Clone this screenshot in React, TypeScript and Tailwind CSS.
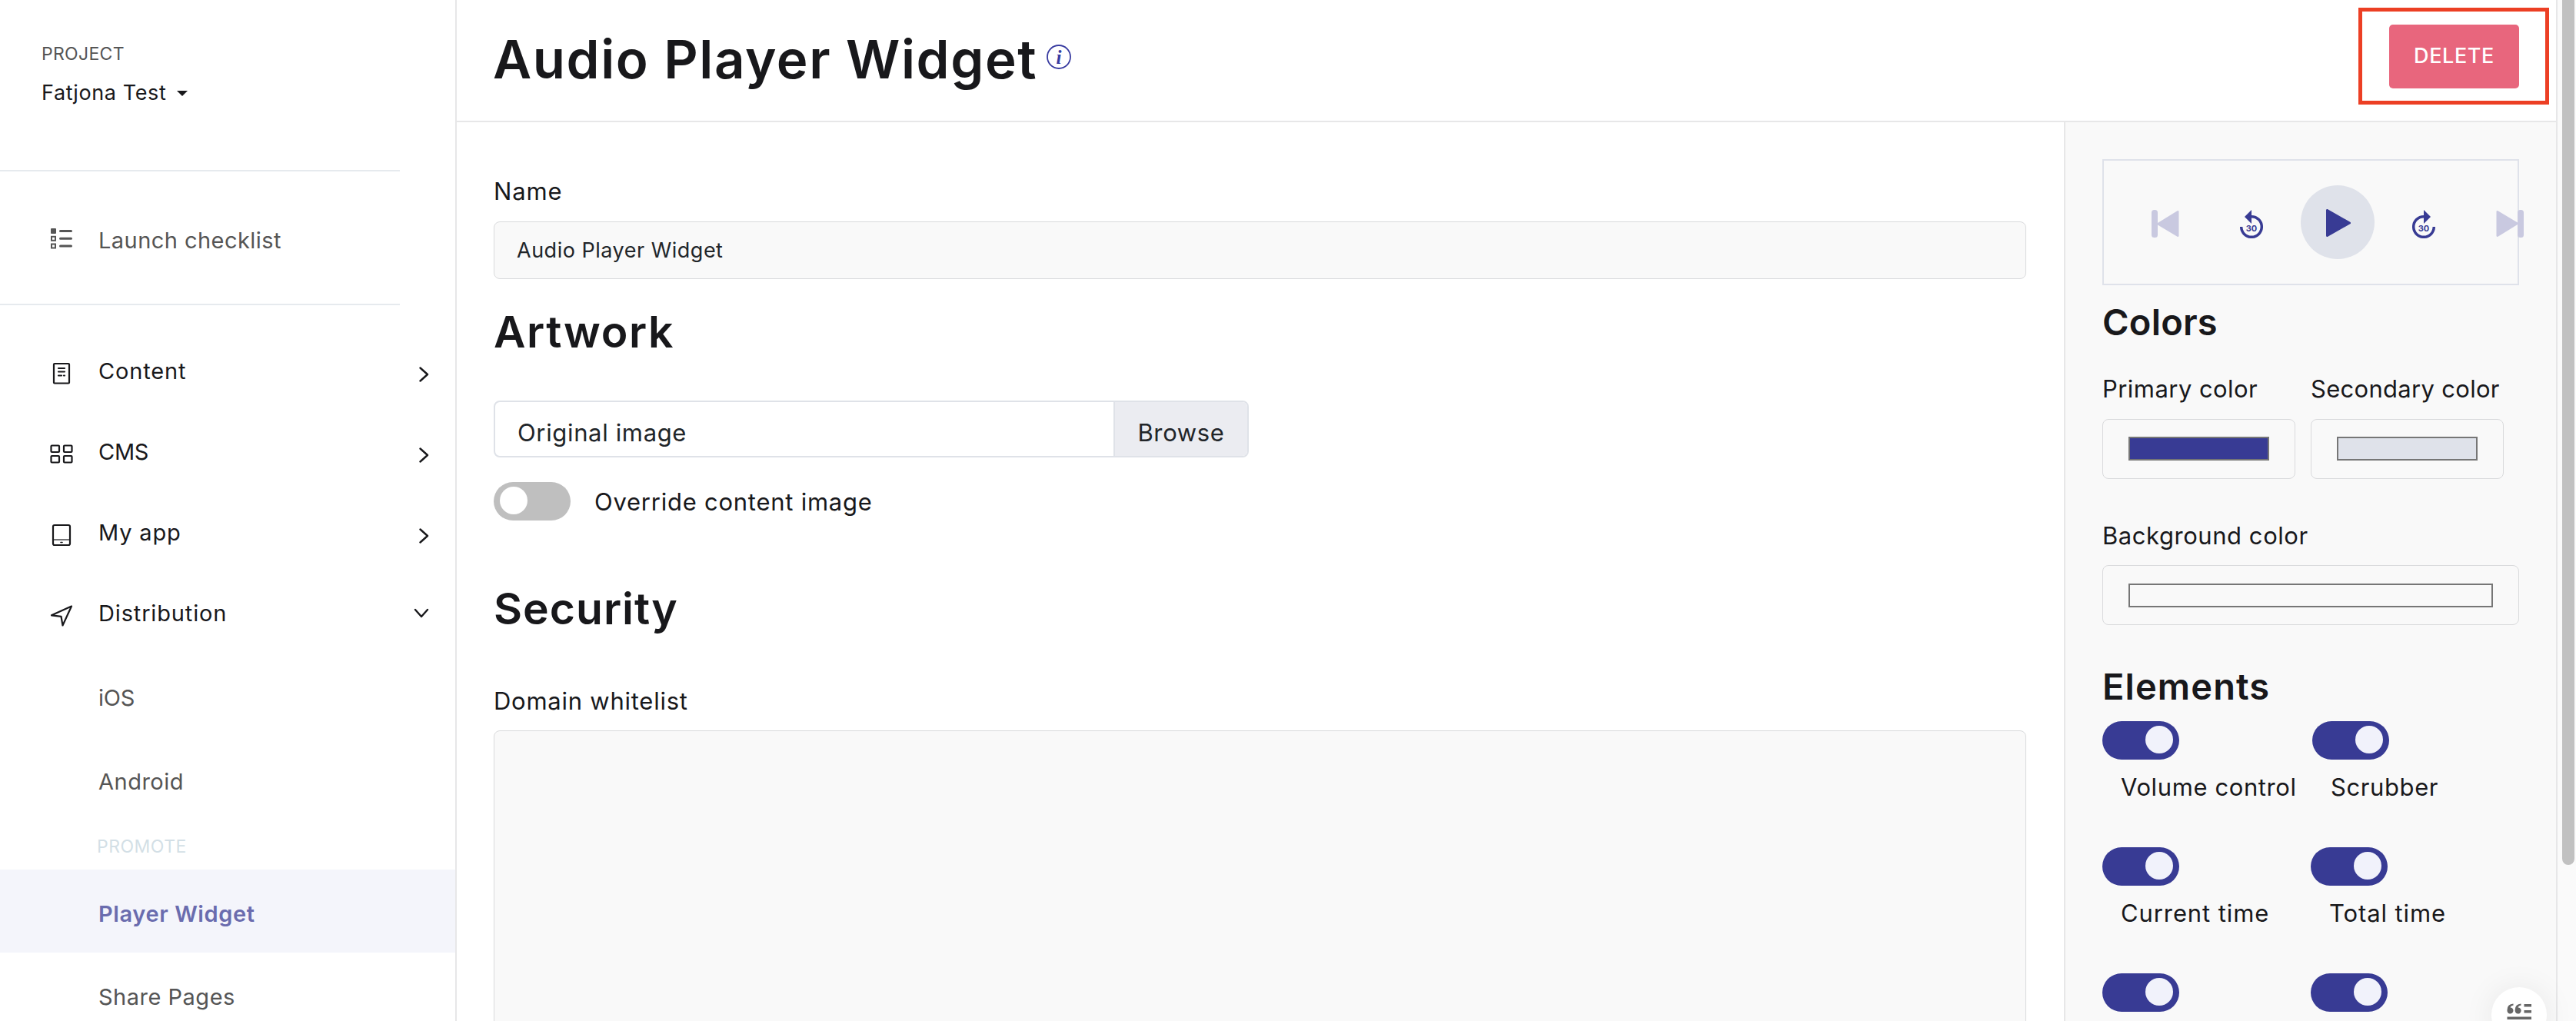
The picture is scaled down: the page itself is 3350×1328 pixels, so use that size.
import type { ReactNode } from "react";

const Chevron = ({ open = false }: { open?: boolean }) =>
  open ? (
    <svg className="w-5 h-5 mr-[34px]" viewBox="0 0 20 20" fill="none" stroke="#18181b" strokeWidth="2.4" strokeLinecap="round" strokeLinejoin="round">
      <path d="M2 5l8 9 8-9" />
    </svg>
  ) : (
    <svg className="w-5 h-5 mr-[31px] mt-[8px]" viewBox="0 0 20 20" fill="none" stroke="#18181b" strokeWidth="2.4" strokeLinecap="round" strokeLinejoin="round">
      <path d="M5.500 1.500l9.500 8.500-9.500 8.500" />
    </svg>
  );

const ChecklistIcon = () => (
  <svg className="w-8 h-8" viewBox="0 0 32 32" fill="none" stroke="#555" strokeWidth="2">
    <rect x="2" y="2" width="7" height="7" rx="1" fill="#555" stroke="none" />
    <rect x="3" y="12.8" width="5" height="5" />
    <rect x="3" y="22.5" width="5" height="5" />
    <path d="M14.500 5.500h14M14.500 15.200h14M14.500 24.900h14" strokeWidth="3" strokeLinecap="round" />
  </svg>
);

const ContentIcon = () => (
  <svg className="w-8 h-8" viewBox="0 0 32 32" fill="none" stroke="#18181b" strokeWidth="2.2">
    <rect x="6" y="3" width="20" height="25.500" rx="1" />
    <path d="M12 9h8M12 13.500h8M12 18.500h4M19 18.500h1" strokeLinecap="round" />
  </svg>
);

const CmsIcon = () => (
  <svg className="w-8 h-8" viewBox="0 0 32 32" fill="none" stroke="#18181b" strokeWidth="2.2">
    <rect x="2.500" y="4.500" width="10.500" height="8.500" rx="1" />
    <rect x="19" y="4.500" width="10.500" height="8.500" rx="1" />
    <rect x="2.500" y="18" width="10.500" height="8.500" rx="1" />
    <rect x="19" y="18" width="10.500" height="8.500" rx="1" />
  </svg>
);

const AppIcon = () => (
  <svg className="w-8 h-8" viewBox="0 0 32 32" fill="none" stroke="#18181b" strokeWidth="2.2">
    <rect x="5" y="3" width="22" height="26" rx="2" />
    <path d="M5 22h22" strokeWidth="1.200" />
    <path d="M15 25.500h2" strokeLinecap="round" strokeWidth="1.600" />
  </svg>
);

const SendIcon = () => (
  <svg className="w-8 h-8" viewBox="0 0 32 32" fill="none" stroke="#18181b" strokeWidth="2.2" strokeLinejoin="round">
    <path d="M29 3.500L3 15.300l12.500 1.500L17.500 28.500z" />
  </svg>
);

const PrevIcon = () => (
  <svg className="w-9 h-9" viewBox="0 0 36 36" fill="#c9c9e0">
    <rect x="0" y="0" width="8" height="36" rx="3.500" />
    <path d="M8 17L33.500 1.300Q35.500 .5 35.500 2.500V33.500Q35.500 35.500 33.500 34.700L8 19.500z" />
  </svg>
);

const Back30Icon = () => (
  <svg className="w-[30px] h-[37px]" viewBox="0 0 30 37">
    <path d="M1.700 22A13.300 13.300 0 1 0 15 8.700" fill="none" stroke="#383b94" strokeWidth="3.500" />
    <path d="M15 0v18L6 9z" fill="#383b94" />
    <text x="15" y="27.500" textAnchor="middle" fontFamily="Inter" fontSize="11" fontWeight="700" fill="#383b94">30</text>
  </svg>
);

const Forward30Icon = () => (
  <svg className="w-[30px] h-[37px]" viewBox="0 0 30 37">
    <path d="M28.300 22A13.300 13.300 0 1 1 15 8.700" fill="none" stroke="#383b94" strokeWidth="3.500" />
    <path d="M15 0v18L24 9z" fill="#383b94" />
    <text x="15" y="27.500" textAnchor="middle" fontFamily="Inter" fontSize="11" fontWeight="700" fill="#383b94">30</text>
  </svg>
);

const NavItem = ({ icon, open, children }: { icon: ReactNode; open?: boolean; children: ReactNode }) => (
  <div className="flex items-center h-[105px] pl-16 text-[29px] tracking-[0.85px]">
    <span className="mt-[7px] mr-[32px]">{icon}</span>
    <span className="flex-1">{children}</span>
    <Chevron open={open} />
  </div>
);

const Toggle = ({ on = false }: { on?: boolean }) =>
  on ? (
    <div className="w-[100px] h-[50px] rounded-full bg-[#383b94] flex justify-end pt-1.5 pr-2">
      <div className="w-9 h-9 rounded-full bg-[#f1f2fb]" />
    </div>
  ) : (
    <div className="w-[100px] h-[50px] rounded-full bg-[#bfbfbf] pt-1.5 pl-2">
      <div className="w-9 h-9 rounded-full bg-white" />
    </div>
  );

export default function App() {
  return (
    <div className="flex w-[3350px] h-[1328px] overflow-hidden bg-white font-['Inter',sans-serif] text-[#18181b] relative">
      <aside className="w-[594px] shrink-0 border-r-2 border-[#e7e7e8]">
        <div className="h-[221px] pt-[54px] pl-[54px]">
          <div className="h-8 leading-8 text-[23px] tracking-[0.3px] text-[#555]">PROJECT</div>
          <div className="mt-[15px] h-[41px] flex items-center gap-[14px] text-[27px] tracking-[0.6px]">
            Fatjona Test
            <svg className="w-[14px] h-[7px]" viewBox="0 0 14 7"><path d="M0 0h14L7 7z" fill="#18181b" /></svg>
          </div>
        </div>
        <div className="w-[520px] h-[176px] border-y-2 border-[#e6eaee] flex items-center pl-16 pt-2 text-[29px] tracking-[0.45px] text-[#555]">
          <span className="-mt-1 mr-[32px]"><ChecklistIcon /></span>
          Launch checklist
        </div>
        <nav className="pt-[33px]">
          <NavItem icon={<ContentIcon />}>Content</NavItem>
          <NavItem icon={<CmsIcon />}><span className="tracking-[-0.3px]">CMS</span></NavItem>
          <NavItem icon={<AppIcon />}>My app</NavItem>
          <NavItem icon={<SendIcon />} open>Distribution</NavItem>
          <div className="pt-[3px] text-[29px] tracking-[0.5px] text-[#555]">
            <div className="h-[109px] pl-32 flex items-center tracking-[-0.2px]">iOS</div>
            <div className="h-[109px] pl-32 flex items-center">Android</div>
            <div className="h-[60px] pl-[126px] flex items-center text-[23px] tracking-[0.5px] text-[#d3dfe6]">PROMOTE</div>
            <div className="h-[108px] pl-32 pt-2 flex items-center bg-[#f4f5fb] font-semibold tracking-[0.6px] text-[#6a6cae]">Player Widget</div>
            <div className="h-[108px] pl-32 pt-2 flex items-center">Share Pages</div>
          </div>
        </nav>
      </aside>

      <main className="w-[2730px] shrink-0">
        <header className="h-[159px] border-b-2 border-[#e7e7e8] flex pl-[47px] pr-[9px]">
          <h1 className="flex-1 flex items-center pb-[2px] text-[69px] font-semibold tracking-[1.55px]">
            Audio Player Widget
            <svg className="w-8 h-8 ml-[12px] -mt-2" viewBox="0 0 32 32">
              <circle cx="16" cy="16" r="15" fill="none" stroke="#383ba0" strokeWidth="1.800" />
              <text x="16" y="24.500" textAnchor="middle" fontFamily="Liberation Serif" fontStyle="italic" fontWeight="700" fontSize="25" letterSpacing="0" fill="#383ba0">i</text>
            </svg>
          </h1>
          <div className="mt-[10px] w-[248px] h-[126px] border-[5px] border-[#ec3f24] pt-[17px] pl-[35px]">
            <button className="w-[169px] h-[83px] rounded-[5px] bg-[#e8667d] text-white text-[27px] font-medium tracking-[0.6px]">DELETE</button>
          </div>
        </header>
        <div className="flex h-[1169px]">
          <section className="w-[2090px] shrink-0 pl-12 pr-[49px] pt-[70px]">
            <div className="h-10 leading-10 text-[31px] tracking-[0.9px]">Name</div>
            <div className="mt-[19px] h-[75px] rounded-lg border border-[#d9dadc] bg-[#f9f9f9] flex items-center pl-[29px] pt-[2px] text-[27px] tracking-[0.5px] text-[#212529]">Audio Player Widget</div>
            <h2 className="mt-[34px] h-[70px] leading-[70px] text-[57px] font-semibold tracking-[1.6px]">Artwork</h2>
            <div className="mt-[54px] w-[982px] h-[74px] rounded-lg border-2 border-[#dfe2e8] flex text-[31px] tracking-[0.65px] text-[#212529] overflow-hidden">
              <div className="flex-1 flex items-center pl-[29px] pt-[10px]">Original image</div>
              <div className="w-[174px] border-l-2 border-[#dfe2e8] bg-[#ebecf1] flex items-center justify-center pt-[10px]">Browse</div>
            </div>
            <div className="mt-8 h-[50px] flex items-center text-[31px] tracking-[0.75px]">
              <Toggle />
              <span className="ml-[31px] pt-[2px]">Override content image</span>
            </div>
            <h2 className="mt-20 h-[70px] leading-[70px] text-[57px] font-semibold tracking-[1px]">Security</h2>
            <div className="mt-[65px] h-10 leading-10 text-[31px] tracking-[0.75px]">Domain whitelist</div>
            <div className="mt-[18px] h-[400px] rounded-lg border border-[#d9dadc] bg-[#f9f9f9]" />
          </section>

          <section className="w-[640px] shrink-0 border-l-2 border-[#e7e7e8] bg-[#f9f9f9] pl-12 pt-12 pr-12">
            <div className="w-[542px] h-[164px] border-2 border-[#dfe2ea] flex items-center pl-[62px] *:shrink-0">
              <div className="mt-1"><PrevIcon /></div>
              <div className="ml-[79px] mt-[5px]"><Back30Icon /></div>
              <div className="ml-[49px] w-24 h-24 rounded-full bg-[#dfe2ea] flex items-center">
                <svg className="ml-[33px] mt-[2px] w-8 h-9" viewBox="0 0 32 36"><path d="M1.500 1.500V34.500L30.500 18z" fill="#383b94" stroke="#383b94" strokeWidth="3" strokeLinejoin="round" /></svg>
              </div>
              <div className="ml-[49px] mt-[5px]"><Forward30Icon /></div>
              <div className="ml-[79px] mt-1 rotate-180"><PrevIcon /></div>
            </div>
            <h2 className="mt-[18px] h-[60px] leading-[60px] text-[47px] font-semibold tracking-[0.2px]">Colors</h2>
            <div className="mt-[37px] flex text-[31px] whitespace-nowrap">
              <div className="w-[271px]">
                <div className="h-10 leading-10 tracking-[0.45px]">Primary color</div>
                <div className="mt-[19px] w-[251px] h-[78px] rounded-lg border border-[#d9dadc] pt-[22px] pl-[33px]">
                  <div className="w-[183px] h-[31px] border-2 border-[#767676] bg-[#383b94]" />
                </div>
              </div>
              <div className="w-[271px]">
                <div className="h-10 leading-10 tracking-[0.3px]">Secondary color</div>
                <div className="mt-[19px] w-[251px] h-[78px] rounded-lg border border-[#d9dadc] pt-[22px] pl-[33px]">
                  <div className="w-[183px] h-[31px] border-2 border-[#767676] bg-[#dfe2ea]" />
                </div>
              </div>
            </div>
            <div className="mt-[54px] h-10 leading-10 text-[31px] tracking-[0.55px]">Background color</div>
            <div className="mt-[18px] w-[542px] h-[78px] rounded-lg border border-[#d9dadc] pt-[23px] pl-[33px]">
              <div className="w-[474px] h-[31px] border-2 border-[#767676] bg-[#f9f9f9]" />
            </div>
            <h2 className="mt-[50px] h-[60px] leading-[60px] text-[47px] font-semibold tracking-[1.1px]">Elements</h2>
            <div className="mt-[15px] grid grid-cols-[271px_271px] auto-rows-[164px] text-[31px] tracking-[0.6px] whitespace-nowrap">
              <div>
                <Toggle on />
                <div className="mt-4 h-10 leading-10 pl-6">Volume control</div>
              </div>
              <div className="pl-[2px]">
                <Toggle on />
                <div className="mt-4 h-10 leading-10 pl-6">Scrubber</div>
              </div>
              <div>
                <Toggle on />
                <div className="mt-4 h-10 leading-10 pl-6 tracking-[0.9px]">Current time</div>
              </div>
              <div>
                <Toggle on />
                <div className="mt-4 h-10 leading-10 pl-6 tracking-[0.9px]">Total time</div>
              </div>
              <Toggle on />
              <Toggle on />
            </div>
          </section>
        </div>
      </main>

      <div className="flex-1 border-l-2 border-[#e7e7e8] bg-[#fafafa] pl-[6px]">
        <div className="w-4 h-[1125px] rounded-b-full bg-[#c1c1c1]" />
      </div>

      <div className="absolute left-[3240px] top-[1284px] w-[72px] h-[72px] rounded-full bg-white shadow-[0_2px_40px_rgba(0,0,0,0.08)] pt-[20px] pl-[20px]">
        <svg className="w-8 h-6" viewBox="0 0 32 24" fill="#666">
          <path d="M8.500 1.500v2.300Q5 4.200 4.600 6.500A4 4 0 1 1 .6 9.500Q.3 2.500 8.500 1.500zM18.500 1.500v2.300Q15 4.200 14.600 6.500A4 4 0 1 1 10.800 9.500Q10.500 2.500 18.500 1.500z" />
          <path d="M22.500 2H32v3.500H22.500zM22.500 10H32v3.500H22.500zM.5 18.500H32V22H.5z" />
        </svg>
      </div>
    </div>
  );
}
